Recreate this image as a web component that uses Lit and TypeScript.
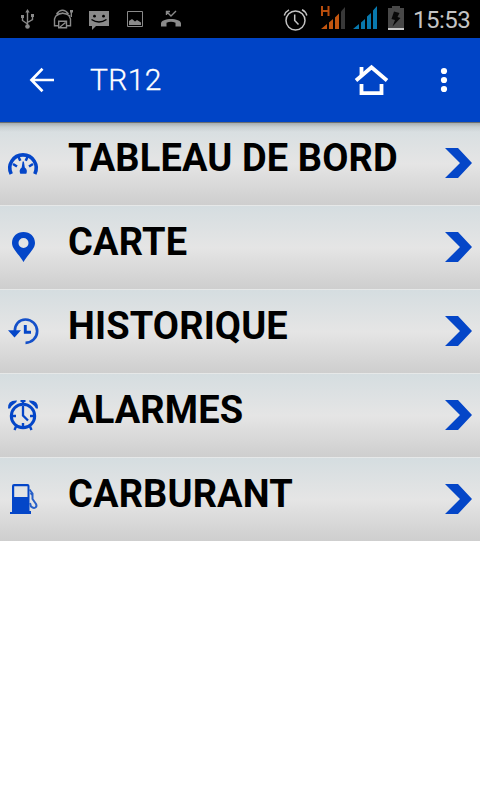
import { LitElement, html, svg, css } from "lit";
import { customElement } from "lit/decorators.js";

const statusLeft = svg`
  <g fill="none" stroke="#8a8a8a" stroke-width="1.4">
    <path d="M27.500 12V26M22.500 17V20.500L27.500 24M32.500 16V19.500L27.500 22.500"/>
    <path d="M54.500 26.500V19A8.300 8 0 0 1 70.500 19V26.500M54 25.800H58.500M67 25.800H71M56.500 14Q62.500 6.500 68.500 14M56 16Q62.500 10.500 70 16M71.300 10V17"/>
    <path d="M58.700 21.200H66.500V27.800H58.700ZM60 27L65.500 22.500"/>
    <path d="M127.500 11.500H142.500V26.500H127.500Z" stroke-width="1"/>
    <path d="M166.500 11.500L171 16L176 11M166.500 15V11.500H170"/>
  </g>
  <g fill="#8a8a8a">
    <path d="M25.300 12.500L27.500 9L29.700 12.500ZM21 15H24V18H21ZM31 14H34V17H31Z"/><circle cx="27.500" cy="26.500" r="2.300"/>
    <path d="M89 11H109V26H96L92 30V26H89Z"/><rect x="70" y="10" width="3" height="2.500"/>
    <path d="M129 25V21L132 19L135 21.500L137 20L141 22.500V25Z"/>
    <path d="M161 26.500V23.500C161 17.500 181 17.500 181 23.500V26.500H175.500V22.800Q171 20.800 166.500 22.800V26.500Z"/>
  </g>
  <g fill="#000"><circle cx="94.500" cy="16.200" r="1.400"/><circle cx="103.500" cy="16.200" r="1.400"/></g>
  <path d="M91.500 19.500Q99 24.500 106.500 19.500" fill="none" stroke="#000" stroke-width="1.500"/>`;

const statusRight = svg`
  <g fill="none" stroke="#c4c4c4" stroke-width="1.500">
    <circle cx="295.500" cy="20.500" r="9.500"/>
    <path d="M294.700 14.500V20.500L298.500 24.500M284.300 15.500Q285.500 11.500 289 9.800M302 9.800Q305.800 11.500 306.800 15.500"/>
  </g>
  <g fill="#c4560f"><path d="M321 29L327 24V29ZM329 22.500L333 19V29H329ZM335 17.500L339 13.500V29H335Z"/></g>
  <path d="M322 6V16M328.500 6V16M322 11H328.500" fill="none" stroke="#b94d0c" stroke-width="2"/>
  <path d="M341 11.500L345 7V29H341Z" fill="#383838"/>
  <path d="M353 29L359 24V29ZM361 22.500L365 19V29H361ZM367 16.500L371 13V29H367ZM373 10.500L377 6V29H373Z" fill="#0878ad"/>
  <path d="M388 8H392V6H400V8H404V28H388Z" fill="#484848"/>
  <path d="M388 28H404V30H388Z" fill="#c9c9c9"/>
  <path d="M394 11.500L399.500 13L397.500 17L400.500 18L392.500 26.500L395 20L391.500 19Z" fill="#080808"/>`;

const icons = {
  gauge: svg`
    <path d="M11.200 52A13.200 13.200 0 1 1 34.800 52" fill="none" stroke="#0446c8" stroke-width="3.600"/>
    <g stroke="#0446c8" stroke-width="2.600"><path d="M13 42L17 44.500M33 42L29 44.500M18.300 34.500L20.300 38.800M27.700 34.500L25.700 38.800"/></g>
    <path d="M22.600 39.500H23.900L24.800 45.500Q28 48 26.300 51.800H20.300Q18.500 48 21.700 45.500Z" fill="#0446c8"/>`,
  pin: svg`<path fill-rule="evenodd" fill="#0446c8" d="M23.500 26C30 26 35 30.500 35 37C35 43 28.500 47.500 23.500 56C18.500 47.500 12 43 12 37C12 30.500 17 26 23.500 26ZM23.500 32A5 5 0 1 0 23.500 42A5 5 0 1 0 23.500 32Z"/>`,
  history: svg`
    <path d="M14.800 41C14.800 34.500 19 29.500 25.500 29.500A11.600 11.600 0 0 1 25.500 52.800" fill="none" stroke="#1450c9" stroke-width="2.700"/>
    <path d="M8 40.300H21L14.500 47.500Z" fill="#0446c8"/>
    <path d="M25.300 35V42.300H31" fill="none" stroke="#0446c8" stroke-width="2.900"/>`,
  alarm: svg`
    <circle cx="23" cy="42" r="11.700" fill="none" stroke="#0446c8" stroke-width="3"/>
    <path d="M23 32V41.500L28 46.500" fill="none" stroke="#0446c8" stroke-width="2.300"/>
    <path d="M12 42H16M30 42H34M23 49V53M16 52.500L14.500 56M30 52.500L31.500 56M23 27V31" fill="none" stroke="#0446c8" stroke-width="2.400"/>
    <path d="M8 34.500Q7.500 26 17 26.500Q17 28 14 30Q11 32 10 34.500ZM38 34.500Q38.500 26 29 26.500Q29 28 32 30Q35 32 36 34.500Z" fill="#0446c8"/>
    <rect x="20.500" y="26" width="5" height="2" fill="#0446c8"/>`,
  fuel: svg`
    <path fill-rule="evenodd" fill="#0446c8" d="M12 28Q12 26 14 26H27.500Q29.500 26 29.500 28V53H31V56H10V54H12ZM14.200 28.300V39H27.500V28.300Z"/>
    <path d="M29.500 31.500L32.500 35.500V41L36 46C37.500 49 34.500 51.500 31 48.500L30 45M30.500 35L32.500 37" fill="none" stroke="#2860c8" stroke-width="2"/>`,
};

const entries: { icon: keyof typeof icons; label: string }[] = [
  { icon: "gauge", label: "TABLEAU DE BORD" },
  { icon: "pin", label: "CARTE" },
  { icon: "history", label: "HISTORIQUE" },
  { icon: "alarm", label: "ALARMES" },
  { icon: "fuel", label: "CARBURANT" },
];

@customElement("app-root")
export class AppRoot extends LitElement {
  static styles = css`
    :host { display: flex; flex-direction: column; width: 480px; height: 800px; overflow: hidden; background: #fff; font-family: Roboto, sans-serif; }
    svg { display: block; flex: none; }
    .status { display: flex; height: 38px; flex: none; background: #000; color: #c4c4c4; }
    .gap { flex: 1; }
    .clock { width: 72px; box-sizing: border-box; padding-left: 5px; font-size: 24px; line-height: 40px; letter-spacing: -0.5px; white-space: nowrap; }
    .bar { display: flex; align-items: center; height: 84px; flex: none; background: #0044c6; color: #fff; }
    .title { flex: 1; padding-left: 10px; font-size: 30px; font-weight: 300; line-height: 36px; letter-spacing: 0.4px; -webkit-text-stroke: 0.3px #fff; }
    .menu { position: relative; }
    .menu::before { content: ""; position: absolute; left: 0; top: 0; width: 100%; height: 10px; background: linear-gradient(rgba(0,0,0,.5) 0 1px, rgba(0,0,0,.22) 1px, rgba(0,0,0,.07) 5px, transparent); }
    .row { display: flex; height: 83px; background: linear-gradient(#d5dde0, #e5e5e5 50%, #cecece); }
    .row + .row { border-top: 1px solid #e6e8e8; }
    .label { flex: 1; padding: 14px 0 0 8px; font-size: 38px; line-height: 44px; font-weight: 700; letter-spacing: 0.12px; color: #000; white-space: nowrap; }
  `;

  render() {
    return html`
      <div class="status">
        <svg width="200" height="38" viewBox="0 0 200 38">${statusLeft}</svg>
        <div class="gap"></div>
        <svg width="128" height="38" viewBox="280 0 128 38">${statusRight}</svg>
        <div class="clock">15:53</div>
      </div>
      <header class="bar">
        <svg width="80" height="84" viewBox="0 38 80 84"><path d="M54 80H32M42.500 68.800L31.500 80L42.500 91.200" fill="none" stroke="#fff" stroke-width="2.700"/></svg>
        <div class="title">TR12</div>
        <svg width="140" height="84" viewBox="340 38 140 84">
          <path d="M356 80.500L371.500 67.300L387 80.500" fill="none" stroke="#fff" stroke-width="3.800"/>
          <path d="M361.500 67V75M361.500 84V93.200H381.500V84" fill="none" stroke="#fff" stroke-width="3.800"/>
          <g fill="#fff"><circle cx="444" cy="71" r="3.100"/><circle cx="444" cy="80" r="3.100"/><circle cx="444" cy="89" r="3.100"/></g>
        </svg>
      </header>
      <nav class="menu">
        ${entries.map((e) => html`
          <div class="row">
            <svg width="60" height="83" viewBox="0 0 60 83">${icons[e.icon]}</svg>
            <div class="label">${e.label}</div>
            <svg width="60" height="83" viewBox="420 0 60 83"><path d="M445 26H458L472 41L458 56H445L460 41Z" fill="#0446c8"/></svg>
          </div>`)}
      </nav>`;
  }
}
